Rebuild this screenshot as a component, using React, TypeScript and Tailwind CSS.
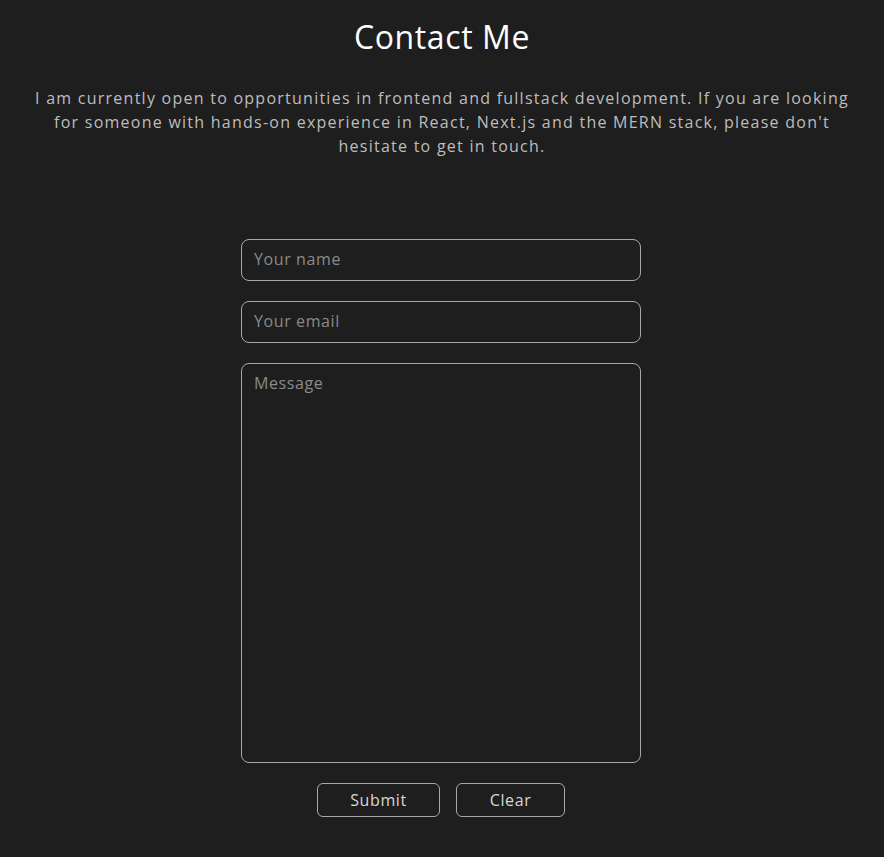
import React, { useState } from 'react';

export default function App() {
  const [name, setName] = useState('');
  const [email, setEmail] = useState('');
  const [message, setMessage] = useState('');

  const clear = () => {
    setName('');
    setEmail('');
    setMessage('');
  };

  return (
    <div className="min-h-screen bg-[#1e1e1e] text-white font-['Open_Sans','Liberation_Sans',sans-serif]">
      <section className="flex flex-col items-center px-8 pt-[16px] pb-10">
        <h1 className="text-[32px] leading-[42px] font-medium tracking-[0.6px] text-white">Contact Me</h1>
        <p className="mt-[28px] max-w-[830px] text-center text-[16px] leading-[24px] tracking-[1.25px] text-[#bdbdbd]">
          I am currently open to opportunities in frontend and fullstack development. If you are looking
          for someone with hands-on experience in React, Next.js and the MERN stack, please don't
          hesitate to get in touch.
        </p>

        <form
          className="mt-[81px] mr-[2px] flex w-[400px] flex-col gap-5"
          onSubmit={(e) => e.preventDefault()}
        >
          <input
            value={name}
            onChange={(e) => setName(e.target.value)}
            placeholder="Your name"
            className="h-[42px] rounded-lg border border-[#a8a8a8] bg-transparent px-3 pb-[2px] text-[16px] tracking-[0.6px] text-white placeholder:text-[#8a8a8a] outline-none"
          />
          <input
            value={email}
            onChange={(e) => setEmail(e.target.value)}
            placeholder="Your email"
            className="h-[42px] rounded-lg border border-[#a8a8a8] bg-transparent px-3 pb-[2px] text-[16px] tracking-[0.6px] text-white placeholder:text-[#8a8a8a] outline-none"
          />
          <textarea
            value={message}
            onChange={(e) => setMessage(e.target.value)}
            placeholder="Message"
            className="h-[400px] resize-none rounded-lg border border-[#a8a8a8] bg-transparent px-3 pt-[7px] pb-2 text-[16px] tracking-[0.6px] text-white placeholder:text-[#8a8a8a] outline-none"
          />
          <div className="flex justify-center gap-4">
            <button
              type="submit"
              className="h-[34px] w-[123px] rounded-md border border-[#a8a8a8] text-[16px] tracking-[0.6px] text-[#d8d8d8]"
            >
              Submit
            </button>
            <button
              type="button"
              onClick={clear}
              className="h-[34px] w-[109px] rounded-md border border-[#a8a8a8] text-[16px] tracking-[0.6px] text-[#d8d8d8]"
            >
              Clear
            </button>
          </div>
        </form>
      </section>
    </div>
  );
}
